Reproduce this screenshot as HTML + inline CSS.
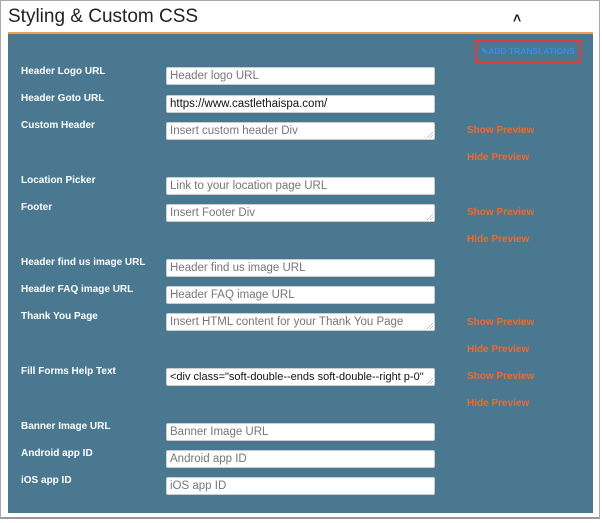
<!DOCTYPE html>
<html><head><meta charset="utf-8"><style>
body{margin:0;width:602px;height:523px;background:#fff;position:relative;overflow:hidden;font-family:"Liberation Sans",Arial,sans-serif}
.outer{position:absolute;left:0;top:0;width:600px;height:519px;border:1px solid #aaa;border-bottom:2px solid #999;box-sizing:border-box}
h1{position:absolute;left:8px;top:6px;margin:0;font-weight:normal;font-size:19px;color:#222}
.car{position:absolute;left:513px;top:10px;font-size:14px;font-weight:bold;color:#222}
.panel{position:absolute;left:8px;top:32px;width:585px;height:481px;background:#4a7891;border-top:2px solid #f0a050;box-sizing:border-box}
.lbl{position:absolute;left:21px;font-size:10px;font-weight:bold;color:#fff}
.in{position:absolute;left:166px;width:269px;height:18px;background:#fff;border:1px solid #ccc;border-radius:2px;box-sizing:border-box;font-size:11.5px;color:#777;padding:2px 3px;white-space:nowrap;overflow:hidden}
.in.v{color:#111}
.ta::after{content:"";position:absolute;right:1px;bottom:1px;width:6px;height:6px;background:linear-gradient(135deg,transparent 45%,#999 50%,transparent 55%,transparent 70%,#999 75%,transparent 80%)}
.lk{position:absolute;left:467px;font-size:10px;font-weight:bold;color:#f06a2a}
.tr{position:absolute;left:475px;top:40px;width:106px;height:23px;border:2px solid #e03a3a;box-sizing:border-box;color:#3a8ee0;font-size:8.5px;font-weight:bold;line-height:19px;padding-left:4px}
</style></head><body>
<div class="outer"></div>
<h1>Styling &amp; Custom CSS</h1>
<div class="car">&#x2C4;</div>
<div class="panel"></div>
<div class="tr">&#x270E;ADD TRANSLATIONS</div>

<div class="lbl" style="top:66px">Header Logo URL</div>
<div class="in" style="top:67px">Header logo URL</div>
<div class="lbl" style="top:93px">Header Goto URL</div>
<div class="in v" style="top:95px">https://www.castlethaispa.com/</div>
<div class="lbl" style="top:120px">Custom Header</div>
<div class="in ta" style="top:122px">Insert custom header Div</div>
<div class="lk" style="top:125px">Show Preview</div>
<div class="lk" style="top:152px">Hide Preview</div>
<div class="lbl" style="top:175px">Location Picker</div>
<div class="in" style="top:177px">Link to your location page URL</div>
<div class="lbl" style="top:202px">Footer</div>
<div class="in ta" style="top:204px">Insert Footer Div</div>
<div class="lk" style="top:207px">Show Preview</div>
<div class="lk" style="top:234px">Hide Preview</div>
<div class="lbl" style="top:257px">Header find us image URL</div>
<div class="in" style="top:259px">Header find us image URL</div>
<div class="lbl" style="top:284px">Header FAQ image URL</div>
<div class="in" style="top:286px">Header FAQ image URL</div>
<div class="lbl" style="top:311px">Thank You Page</div>
<div class="in ta" style="top:313px">Insert HTML content for your Thank You Page</div>
<div class="lk" style="top:317px">Show Preview</div>
<div class="lk" style="top:344px">Hide Preview</div>
<div class="lbl" style="top:366px">Fill Forms Help Text</div>
<div class="in v ta" style="top:368px;font-size:11px">&lt;div class="soft-double--ends soft-double--right p-0"</div>
<div class="lk" style="top:371px">Show Preview</div>
<div class="lk" style="top:398px">Hide Preview</div>
<div class="lbl" style="top:421px">Banner Image URL</div>
<div class="in" style="top:423px">Banner Image URL</div>
<div class="lbl" style="top:448px">Android app ID</div>
<div class="in" style="top:450px">Android app ID</div>
<div class="lbl" style="top:475px">iOS app ID</div>
<div class="in" style="top:477px">iOS app ID</div>
</body></html>
